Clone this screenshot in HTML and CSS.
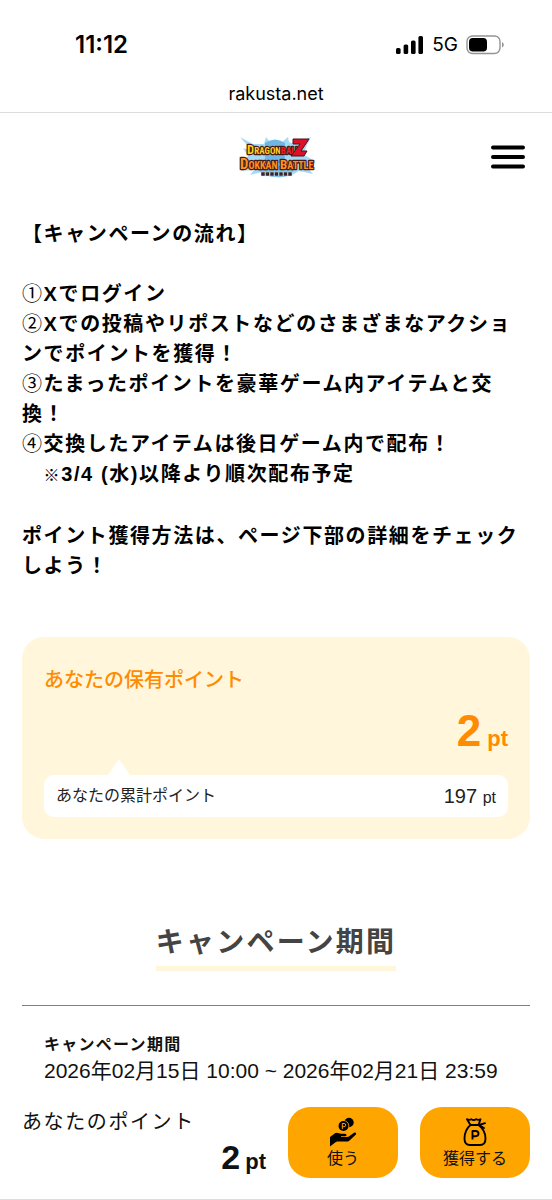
FILE: index.html
```html
<!DOCTYPE html>
<html lang="ja">
<head>
<meta charset="utf-8">
<meta name="viewport" content="width=device-width, initial-scale=1">
<title>キャンペーン</title>
<link rel="stylesheet" href="styles.css">
</head>
<body>
<div class="status">
  <time class="clock">11:12</time>
  <div class="signals">
    <svg width="28" height="18" viewBox="0 0 28 18" aria-hidden="true"><rect x="0" y="12" width="4.600" height="6" rx="1.6"/><rect x="7.600" y="8.500" width="4.600" height="9.500" rx="1.6"/><rect x="15" y="4.500" width="4.600" height="13.500" rx="1.6"/><rect x="22.400" y="0" width="4.600" height="18" rx="1.6"/></svg>
    <span class="network">5G</span>
    <svg width="38" height="20" viewBox="0 0 38 20" aria-hidden="true"><rect x="1" y="1" width="33" height="17.500" rx="5.500" fill="#fff" stroke="#949494" stroke-width="1.400"/><rect x="3" y="3" width="18" height="13.500" rx="3.800"/><path d="M36 7v5.500q1.800-.8 1.800-2.700T36 7z" fill="#949494"/></svg>
  </div>
</div>
<div class="address">rakusta.net</div>
<header class="header">
  <svg class="logo" width="78" height="44" viewBox="0 0 78 44" role="img" aria-label="DRAGON BALL Z DOKKAN BATTLE">
    <path d="M3 2l13 7 11 0 2-7 4 5 6-2 6 2 6-5 1 5 5 2 17-7-5 10-2 8 11 6-9 5 7 8-14-3-7 4-9-2-3 5-5-5-8 3-5-4-12 3 4-5-13 1 7-6-5-3 5-6-5-8 9 3z" fill="#a5daf6"/>
    <path d="M28 8q10-7 20 0v20H28zM19 34q20-7 40 0l-8 7q-12 3-23-1z" fill="#6db6e6"/>
    <g class="logo-text" font-weight="700" stroke="#4a1b13" stroke-width="2.400" stroke-linejoin="round" paint-order="stroke">
      <text x="10" y="19" font-size="9" fill="#ffd21c"><tspan font-size="13">D</tspan>RAGON<tspan fill="#f02032">BALL</tspan></text>
      <text x="3" y="34" font-size="10" fill="#ff921f"><tspan font-size="15">D</tspan>OKKAN <tspan font-size="13">B</tspan>ATTLE</text>
    </g>
    <path d="M56 4h16l-8 12h6l-3 5H54l9-12h-7z" fill="#dc1026" stroke="#501118" stroke-width="1"/>
    <g fill="#34262a" stroke="#d7edf8" stroke-width=".5"><rect x="24" y="37" width="4" height="4"/><rect x="28.500" y="37" width="4" height="4"/><rect x="33" y="37" width="4" height="4"/><rect x="37.500" y="37" width="4" height="4"/><rect x="42" y="37" width="4" height="4"/><rect x="46.500" y="37" width="4" height="4"/><rect x="51" y="37" width="4" height="4"/></g>
  </svg>
  <button class="menu" type="button" aria-label="メニュー">
    <svg width="34" height="24" viewBox="0 0 34 24" fill="none" stroke="#000" stroke-width="4" stroke-linecap="round" aria-hidden="true"><path d="M2 2.500h30M2 12h30M2 21.500h30"/></svg>
  </button>
</header>
<main class="main">
  <section class="flow">
    <h2 class="flow-title">【キャンペーンの流れ】</h2>
    <div>
      <p class="step">①Xでログイン</p>
      <p class="step">②Xでの投稿やリポストなどのさまざまなアクションでポイントを獲得！</p>
      <p class="step">③たまったポイントを豪華ゲーム内アイテムと交換！</p>
      <p class="step">④交換したアイテムは後日ゲーム内で配布！</p>
      <p>　<span class="mark">※</span>3/4 (水)以降より順次配布予定</p>
    </div>
    <p>ポイント獲得方法は、ページ下部の詳細をチェックしよう！</p>
  </section>
  <section class="card">
    <h2 class="card-title">あなたの保有ポイント</h2>
    <p class="balance"><span class="balance-value">2</span><span class="unit">pt</span></p>
    <div class="total">
      <span class="total-label">あなたの累計ポイント</span>
      <span class="total-value">197 <small>pt</small></span>
    </div>
  </section>
  <h2 class="heading">キャンペーン期間</h2>
  <section class="period">
    <h3 class="period-title">キャンペーン期間</h3>
    <p class="period-date">2026年02月15日 10:00 ~ 2026年02月21日 23:59</p>
  </section>
</main>
<footer class="bar">
  <div class="mine">
    <span class="mine-label">あなたのポイント</span>
    <span class="mine-points"><span class="mine-value">2</span><span class="unit">pt</span></span>
  </div>
  <button class="action" type="button">
    <svg width="28" height="30" viewBox="0 0 28 30" aria-hidden="true"><circle cx="20" cy="5.500" r="4.700"/><circle cx="14.500" cy="9" r="5.800" fill="#ffa500"/><circle cx="14.500" cy="9" r="5"/><path d="M13.300 12V6.500h1.800q1.700 0 1.700 1.600t-1.700 1.600h-1.800" fill="none" stroke="#ffa500" stroke-width="1"/><path d="M1 20l5-3.700q1.500-.9 3-.4l3 .8h4q1.700.1 1.500 1.500-.1 1-1.500 1h-4v.9h5.500l2-.3 5.500-4q1.300-.7 2 .2.500.8-.3 1.700l-6.500 6q-1 .9-2.500.9H8.500q-1.300 0-2 .7L1 29.500z"/></svg>
    <span>使う</span>
  </button>
  <button class="action" type="button">
    <svg width="28" height="30" viewBox="0 0 28 30" fill="none" stroke="#000" stroke-width="1.900" stroke-linecap="round" stroke-linejoin="round" aria-hidden="true"><path d="M9.500 8L6 2.200q2.300 1.300 4.300 0 2.500 1.500 4.700 0 2.500 1.300 4.500 0L17.500 8zM9.500 8Q3.500 13 3.500 21.500q0 6.500 5.500 6.500h10q5.500 0 5.500-6.500 0-8.500-7-13.500"/><path d="M18 8l6-1.800M18 8l5 3"/><path d="M11.500 22.500v-8.500h3q3 0 3 2.600t-3 2.600h-3" stroke-linecap="butt"/></svg>
    <span>獲得する</span>
  </button>
</footer>
</body>
</html>
```
FILE: styles.css
```css
* {
  box-sizing: border-box;
}

body {
  display: flex;
  flex-direction: column;
  min-height: 100vh;
  margin: 0;
  background: #fff;
  color: #111;
  font-family: "Liberation Sans", "Noto Sans CJK JP", sans-serif;
  font-size: 20px;
  line-height: 30px;
}

h2,
h3,
p {
  margin: 0;
}

button {
  padding: 0;
  border: 0;
  font: inherit;
  color: inherit;
}

svg {
  display: block;
}

.status {
  display: flex;
  justify-content: space-between;
  align-items: center;
  padding: 30px 48px 0 75px;
  color: #000;
  font-family: Inter, sans-serif;
}

.clock {
  font-size: 24px;
  font-weight: 600;
}

.signals {
  display: flex;
  align-items: center;
  gap: 8px;
}

.network {
  font-size: 19px;
}

.address {
  padding: 19px 0 3px;
  border-bottom: 1px solid #ddd;
  color: #000;
  font-family: Inter, sans-serif;
  font-size: 18px;
  text-align: center;
}

.header {
  display: grid;
  grid-template-columns: 1fr auto 1fr;
  align-items: center;
  padding: 22px 27px;
}

.logo {
  grid-column: 2;
}

.logo-text {
  font-family: "Liberation Sans Narrow", "Roboto Condensed", "Open Sans Condensed", Roboto, sans-serif;
}

.menu {
  justify-self: end;
  background: none;
}

.main {
  padding: 18px 22px 0;
}

.flow {
  display: flex;
  flex-direction: column;
  gap: 30px;
  color: #000;
  font-weight: 700;
  letter-spacing: 0.08em;
}

.flow-title {
  font-size: 20px;
}

.step::first-letter {
  font-weight: 400;
}

.mark {
  font-size: 16px;
}

.card {
  margin-top: 56px;
  padding: 28px 22px 22px;
  border-radius: 22px;
  background: #fff6dc;
}

.card-title {
  color: #ff8c00;
  font-size: 20px;
  font-weight: 500;
}

.balance {
  display: flex;
  justify-content: flex-end;
  align-items: baseline;
  gap: 6px;
  margin: 14px 0 22px;
  color: #ff8c00;
  font-weight: 700;
  line-height: 44px;
}

.balance-value {
  font-size: 44px;
}

.unit {
  font-size: 22px;
  line-height: 22px;
}

.total {
  position: relative;
  display: flex;
  justify-content: space-between;
  align-items: center;
  padding: 6px 12px;
  border-radius: 10px;
  background: #fff;
  color: #222;
}

.total::before {
  content: "";
  position: absolute;
  bottom: 100%;
  left: 64px;
  border: 11px solid transparent;
  border-top-width: 0;
  border-bottom: 16px solid #fff;
}

.total-label,
.total-value small {
  font-size: 16px;
}

.total-value small {
  line-height: 16px;
}

.heading {
  width: fit-content;
  margin: 83px auto 34px;
  padding-bottom: 2px;
  border-bottom: 5px solid #fff6dc;
  color: #444;
  font-size: 28px;
  line-height: 42px;
  letter-spacing: 0.08em;
}

.period {
  padding: 28px 22px 0;
  border-top: 1px solid #7d8088;
}

.period-title {
  font-size: 16px;
  line-height: 22px;
  letter-spacing: 0.08em;
}

.period-date {
  font-size: 21px;
}

.bar {
  position: sticky;
  bottom: 0;
  display: flex;
  gap: 22px;
  margin-top: auto;
  padding: 20px 22px 21px;
  border-bottom: 1px solid #ddd;
  background: #fff;
}

.mine {
  display: flex;
  flex: 1;
  flex-direction: column;
}

.mine-label {
  letter-spacing: 0.08em;
}

.mine-points {
  display: flex;
  justify-content: flex-end;
  align-items: baseline;
  gap: 5px;
  font-weight: 700;
  line-height: 40px;
}

.mine-value {
  font-size: 34px;
}

.action {
  display: flex;
  flex-direction: column;
  align-items: center;
  width: 110px;
  padding: 10px 0 8px;
  border-radius: 22px;
  background: #ffa500;
  font-size: 16px;
  line-height: 23px;
}
```
